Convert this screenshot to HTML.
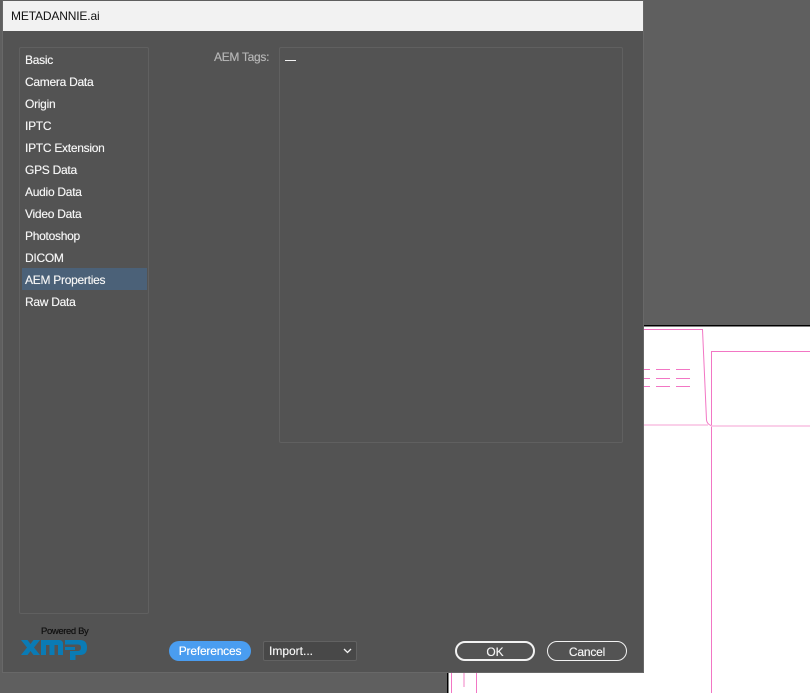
<!DOCTYPE html>
<html>
<head>
<meta charset="utf-8">
<style>
html,body{margin:0;padding:0;background:#5f5f5f;}
body{width:810px;height:693px;position:relative;overflow:hidden;font-family:"Liberation Sans",sans-serif;}
.a{position:absolute;box-sizing:border-box;white-space:nowrap;}
.item{position:absolute;left:25px;color:#f4f4f4;font-size:12px;line-height:16px;letter-spacing:-.27px;text-shadow:0 0 .4px #f4f4f4;}
</style>
</head>
<body>
<svg class="a" style="left:0;top:0" width="810" height="693" viewBox="0 0 810 693">
<rect x="447" y="325" width="363" height="368" fill="#fff"/>
<rect x="447" y="325" width="363" height="1.500" fill="#000"/>
<rect x="447" y="325" width="1.500" height="368" fill="#000"/>
<g fill="none" stroke="#f276c4" stroke-width="1">
<path d="M643 329.500H702.500L706.500 420Q707 424 711 425.500"/>
<path d="M711.500 693V351.500H810"/>
<path d="M643 369.500H650M656 369.500H670M676 369.500H690"/>
<path d="M643 378.500H650M656 378.500H670M676 378.500H690"/>
<path d="M643 386.500H650M656 386.500H670M676 386.500H690"/>
<path d="M451.500 672V693M476.500 672V693"/>
</g>
<path d="M643 425H708M711 426H810" stroke="#f8c0e2" stroke-width="1.500" fill="none"/>
<path d="M464 672V687" stroke="#f8c0e2" stroke-width="2" fill="none"/>
</svg>

<div class="a" style="left:2px;top:0;width:642px;height:673px;background:#535353;border:1px solid #686868;border-top:1px solid #5f5f5f;"></div>
<div class="a" style="left:3px;top:1px;width:640px;height:30px;background:#f2f2f2;"></div>
<div class="a" style="left:11px;top:8px;color:#111;font-size:12px;line-height:16px;letter-spacing:-.15px;">METADANNIE.ai</div>

<div class="a" style="left:19px;top:47px;width:130px;height:567px;border:1px solid #606060;border-radius:2px;"></div>
<div class="a" style="left:22px;top:268px;width:125px;height:22px;background:#4b6178;"></div>
<div class="item" style="top:52px">Basic</div>
<div class="item" style="top:74px">Camera Data</div>
<div class="item" style="top:96px">Origin</div>
<div class="item" style="top:118px">IPTC</div>
<div class="item" style="top:140px">IPTC Extension</div>
<div class="item" style="top:162px">GPS Data</div>
<div class="item" style="top:184px">Audio Data</div>
<div class="item" style="top:206px">Video Data</div>
<div class="item" style="top:228px">Photoshop</div>
<div class="item" style="top:250px">DICOM</div>
<div class="item" style="top:272px">AEM Properties</div>
<div class="item" style="top:294px">Raw Data</div>

<div class="a" style="left:214px;top:49px;color:#b4b4b4;font-size:12px;line-height:16px;letter-spacing:-.3px;text-shadow:0 0 .4px #b4b4b4;">AEM Tags:</div>
<div class="a" style="left:279px;top:47px;width:344px;height:396px;border:1px solid #606060;border-radius:2px;"></div>
<div class="a" style="left:285px;top:60px;width:11px;height:1px;background:#f2f2f2;"></div>

<div class="a" style="left:41px;top:626px;color:#111;font-size:9.500px;line-height:12px;letter-spacing:-.38px;text-shadow:0 0 .4px #111;">Powered By</div>
<svg class="a" style="left:21px;top:640px" width="68" height="21" viewBox="0 0 68 21">
<g fill="#0a7bb5">
<path d="M0 0H6.500L9.500 4L12.500 0H19L13 7.500L19 15H12.500L9.500 11L6.500 15H0L6 7.500Z"/>
<path d="M20 0H38Q42 0 42 4V15H37V5H33.500V15H28.500V5H25V15H20Z"/>
<path d="M44 0H59Q66 0 66 7.500Q66 15 59 15H54.500V20H49V11H57Q60 11 60 7.500Q60 4.500 57 4.500H44Z"/>
<rect x="44" y="7" width="10" height="3"/>
</g>
</svg>

<div class="a" style="left:169px;top:641px;width:82px;height:20px;background:#4a9df0;border-radius:10px;color:#fff;font-size:12px;line-height:21px;text-align:center;letter-spacing:-.2px;text-shadow:0 0 .4px #fff;">Preferences</div>
<div class="a" style="left:263px;top:641px;width:94px;height:20px;background:#484848;border:1px solid #626262;border-radius:2px;color:#f4f4f4;font-size:12px;line-height:19px;padding-left:5px;text-shadow:0 0 .4px #f4f4f4;">Import...</div>
<svg class="a" style="left:343px;top:648px" width="10" height="6" viewBox="0 0 10 6"><path d="M1 1L4.500 4.500L8 1" fill="none" stroke="#f2f2f2" stroke-width="1.300"/></svg>

<div class="a" style="left:455px;top:641px;width:80px;height:20px;border:2px solid #f2f2f2;border-radius:10px;color:#f2f2f2;font-size:12px;line-height:18px;text-align:center;text-shadow:0 0 .4px #f2f2f2;">OK</div>
<div class="a" style="left:547px;top:641px;width:80px;height:20px;border:1px solid #f2f2f2;border-radius:10px;color:#f2f2f2;font-size:12px;line-height:20px;text-align:center;letter-spacing:-.2px;text-shadow:0 0 .4px #f2f2f2;">Cancel</div>
</body>
</html>
